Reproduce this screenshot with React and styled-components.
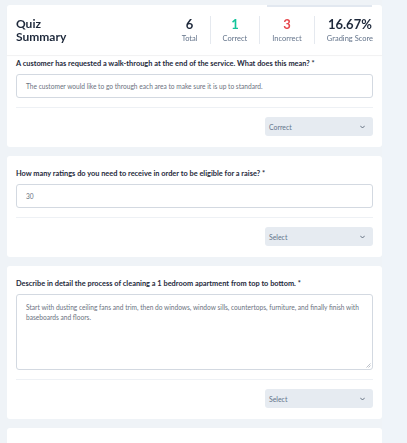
import styled, { createGlobalStyle } from 'styled-components'

const GlobalStyle = createGlobalStyle`
  * { box-sizing: border-box; }
  body {
    margin: 0;
    background: #f0f4f8;
    font-family: Lato, "Noto Sans", sans-serif;
    color: #1e293b;
  }
`

const Page = styled.div`
  display: flex;
  height: 443px;
  overflow: hidden;
`

const Main = styled.main`
  width: 382px;
  padding: 5px 0 0 7px;
  background: #eff3f7;
`

const Aside = styled.aside`
  flex: 1;
  background: #eff4f9;
`

const Header = styled.header`
  position: sticky;
  top: 5px;
  z-index: 2;
  height: 50px;
  padding: 0 9px;
  background: #fff;
  border-radius: 3px 3px 0 0;
  box-shadow: 0 1px 1px rgba(15, 23, 42, 0.06);
  display: flex;
  align-items: center;
  justify-content: space-between;
`

const TopBar = styled.div`
  position: absolute;
  top: 0;
  right: 10px;
  width: 105px;
  height: 2px;
  background: #e2e8f0;
`

const Title = styled.h1`
  margin: 0;
  font-size: 12px;
  line-height: 13.5px;
  font-weight: 700;
  color: #1e293b;
`

const Stats = styled.div`
  display: flex;
  align-items: center;
`

const Stat = styled.div`
  display: flex;
  flex-direction: column;
  align-items: center;
  height: 28px;
  padding: 0 12px;
  border-left: ${p => (p.$first ? 'none' : '1px solid #e5e9ef')};

  &:last-child {
    padding-right: 0;
  }
`

const StatValue = styled.div`
  font-size: 13px;
  line-height: 16px;
  font-weight: 700;
  color: ${p => p.$color || '#1e293b'};
`

const StatLabel = styled.div`
  margin-top: 2px;
  font-size: 7.5px;
  line-height: 10px;
  color: #64748b;
`

const List = styled.div`
  display: flex;
  flex-direction: column;
  gap: 9px;
  margin-top: -9px;
`

const Card = styled.section`
  background: #fff;
  border-radius: 3px;
  padding: 12px 9px 11px;
  display: flex;
  flex-direction: column;
  min-height: ${p => p.$min || 0}px;
`

const Question = styled.div`
  font-size: 7.4px;
  line-height: 11px;
  font-weight: 700;
  color: #1e293b;
  white-space: nowrap;
`

const Field = styled.div`
  margin-top: 5px;
  height: ${p => (p.$tall ? '76px' : '24px')};
  padding: ${p => (p.$tall ? '7px 9px' : '0 9px')};
  border: 1px solid #d3d9e1;
  border-radius: 3px;
  font-size: 6.6px;
  line-height: 10px;
  color: #6b7280;
  display: flex;
  align-items: ${p => (p.$tall ? 'flex-start' : 'center')};
  position: relative;
`

const Grip = styled.svg`
  position: absolute;
  right: 1px;
  bottom: 1px;
`

const Divider = styled.hr`
  margin: 9px 0;
  border: none;
  border-top: 1px solid #eef1f5;
`

const Footer = styled.div`
  display: flex;
  justify-content: flex-end;
`

const SelectBox = styled.div`
  width: 108px;
  height: 19px;
  padding: 0 8px 0 4px;
  border-radius: 3px;
  background: #e6ebf1;
  font-size: 6.9px;
  color: #64748b;
  display: flex;
  align-items: center;
  justify-content: space-between;
`

const Chevron = () => (
  <svg width="5" height="4" viewBox="0 0 10 6" fill="none">
    <path d="M1 1l4 4 4-4" stroke="#475569" strokeWidth="1.6" strokeLinecap="round" strokeLinejoin="round" />
  </svg>
)

const questions = [
  {
    text: 'A customer has requested a walk-through at the end of the service. What does this mean? *',
    answer: 'The customer would like to go through each area to make sure it is up to standard.',
    grade: 'Correct',
  },
  {
    text: 'How many ratings do you need to receive in order to be eligible for a raise? *',
    answer: '30',
    grade: 'Select',
  },
  {
    text: 'Describe in detail the process of cleaning a 1 bedroom apartment from top to bottom.   *',
    answer:
      'Start with dusting ceiling fans and trim, then do windows, window sills, countertops, furniture, and finally finish with baseboards and floors.',
    grade: 'Select',
    tall: true,
  },
]

function QuestionCard({ q }) {
  return (
    <Card>
      <Question>{q.text}</Question>
      <Field $tall={q.tall}>
        {q.answer}
        {q.tall && (
          <Grip width="5" height="5" viewBox="0 0 5 5">
            <path d="M4.5 0.5L0.5 4.5M4.5 2.5L2.5 4.5" stroke="#a0a8b3" strokeWidth="0.7" />
          </Grip>
        )}
      </Field>
      <Divider />
      <Footer>
        <SelectBox>
          {q.grade}
          <Chevron />
        </SelectBox>
      </Footer>
    </Card>
  )
}

export default function App() {
  return (
    <>
      <GlobalStyle />
      <Page>
        <Main>
          <Header>
            <TopBar />
            <Title>
              Quiz
              <br />
              Summary
            </Title>
            <Stats>
              <Stat $first>
                <StatValue>6</StatValue>
                <StatLabel>Total</StatLabel>
              </Stat>
              <Stat>
                <StatValue $color="#12c49a">1</StatValue>
                <StatLabel>Correct</StatLabel>
              </Stat>
              <Stat>
                <StatValue $color="#e5484d">3</StatValue>
                <StatLabel>Incorrect</StatLabel>
              </Stat>
              <Stat>
                <StatValue>16.67%</StatValue>
                <StatLabel>Grading Score</StatLabel>
              </Stat>
            </Stats>
          </Header>
          <List>
            {questions.map((q, i) => (
              <QuestionCard key={i} q={q} />
            ))}
            <Card $min={40} />
          </List>
        </Main>
        <Aside />
      </Page>
    </>
  )
}
